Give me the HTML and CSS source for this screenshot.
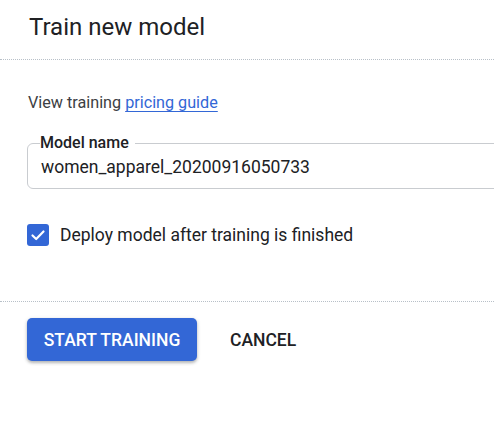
FILE: index.html
```html
<!DOCTYPE html>
<html>
<head>
<meta charset="utf-8">
<link rel="stylesheet" href="styles.css">
</head>
<body>
<div class="dialog">
  <h1 class="title">Train new model</h1>
  <div class="divider"></div>
  <div class="content">
    <p class="pricing">View training <a class="link" href="#">pricing guide</a></p>
    <fieldset class="field">
      <legend class="field-label">Model name</legend>
      <div class="field-value">women_apparel_20200916050733</div>
    </fieldset>
    <label class="check">
      <span class="box">
        <svg width="22" height="22" viewBox="0 0 22 22"><path d="M5.5 11.5 L9.2 15 L16.5 7.5" fill="none" stroke="#fff" stroke-width="2.2" stroke-linecap="round" stroke-linejoin="round"/></svg>
      </span>
      <span class="check-text">Deploy model after training is finished</span>
    </label>
  </div>
  <div class="divider"></div>
  <div class="actions">
    <button class="btn primary">START TRAINING</button>
    <button class="btn text">CANCEL</button>
  </div>
</div>
</body>
</html>
```
FILE: styles.css
```css
html, body {
  margin: 0;
  padding: 0;
  background: #fff;
}
body {
  font-family: Roboto, "Liberation Sans", sans-serif;
  color: #202124;
  overflow: hidden;
  width: 494px;
  height: 445px;
}
.dialog {
  display: flex;
  flex-direction: column;
}
.title {
  margin: 0;
  padding: 12px 0 0 29px;
  height: 46px;
  box-sizing: border-box;
  font-size: 24px;
  font-weight: 400;
  line-height: 30px;
  color: #202124;
}
.divider {
  height: 0;
  border-top: 1px dotted #b8c0c8;
  margin-top: 13px;
}
.content {
  padding: 0 0 0 27px;
  display: flex;
  flex-direction: column;
}
.pricing {
  margin: 33px 0 0 1px;
  font-size: 16.2px;
  line-height: 20px;
  color: #3c4043;
}
.link {
  color: #3367d6;
  text-decoration: underline;
  text-decoration-color: #3367d6;
  text-underline-offset: 3px;
}
.field {
  margin: 22px -20px 0 0;
  padding: 0 13px 0 13px;
  border: 1px solid #c9ccd0;
  border-radius: 6px;
  height: 54px;
  box-sizing: border-box;
  min-width: 0;
}
.field-label {
  padding: 0 6px 0 0;
  margin-left: -1px;
  font-size: 16px;
  font-weight: 500;
  line-height: 16px;
  color: #202124;
}
.field-value {
  font-size: 17.5px;
  line-height: 22px;
  margin-top: 5px;
  color: #202124;
  white-space: nowrap;
}
.check {
  display: flex;
  align-items: center;
  gap: 11px;
  margin-top: 35px;
  margin-bottom: 42px;
}
.box {
  width: 22px;
  height: 22px;
  flex: none;
  background: #3367d6;
  border-radius: 3px;
  display: flex;
}
.check-text {
  font-size: 17.5px;
  line-height: 22px;
  color: #202124;
}
.actions {
  display: flex;
  align-items: center;
  gap: 17px;
  padding: 16px 0 0 27px;
}
.btn {
  font-family: Roboto, "Liberation Sans", sans-serif;
  font-size: 17.5px;
  font-weight: 500;
  border: none;
  cursor: pointer;
  height: 43px;
  padding: 0 16px;
  border-radius: 5px;
}
.primary {
  background: #3367d6;
  color: #fff;
  width: 170px;
  box-shadow: 0 2px 3px rgba(60, 64, 67, 0.3), 0 1px 4px rgba(60, 64, 67, 0.15);
}
.text {
  background: transparent;
  color: #202124;
}
```
